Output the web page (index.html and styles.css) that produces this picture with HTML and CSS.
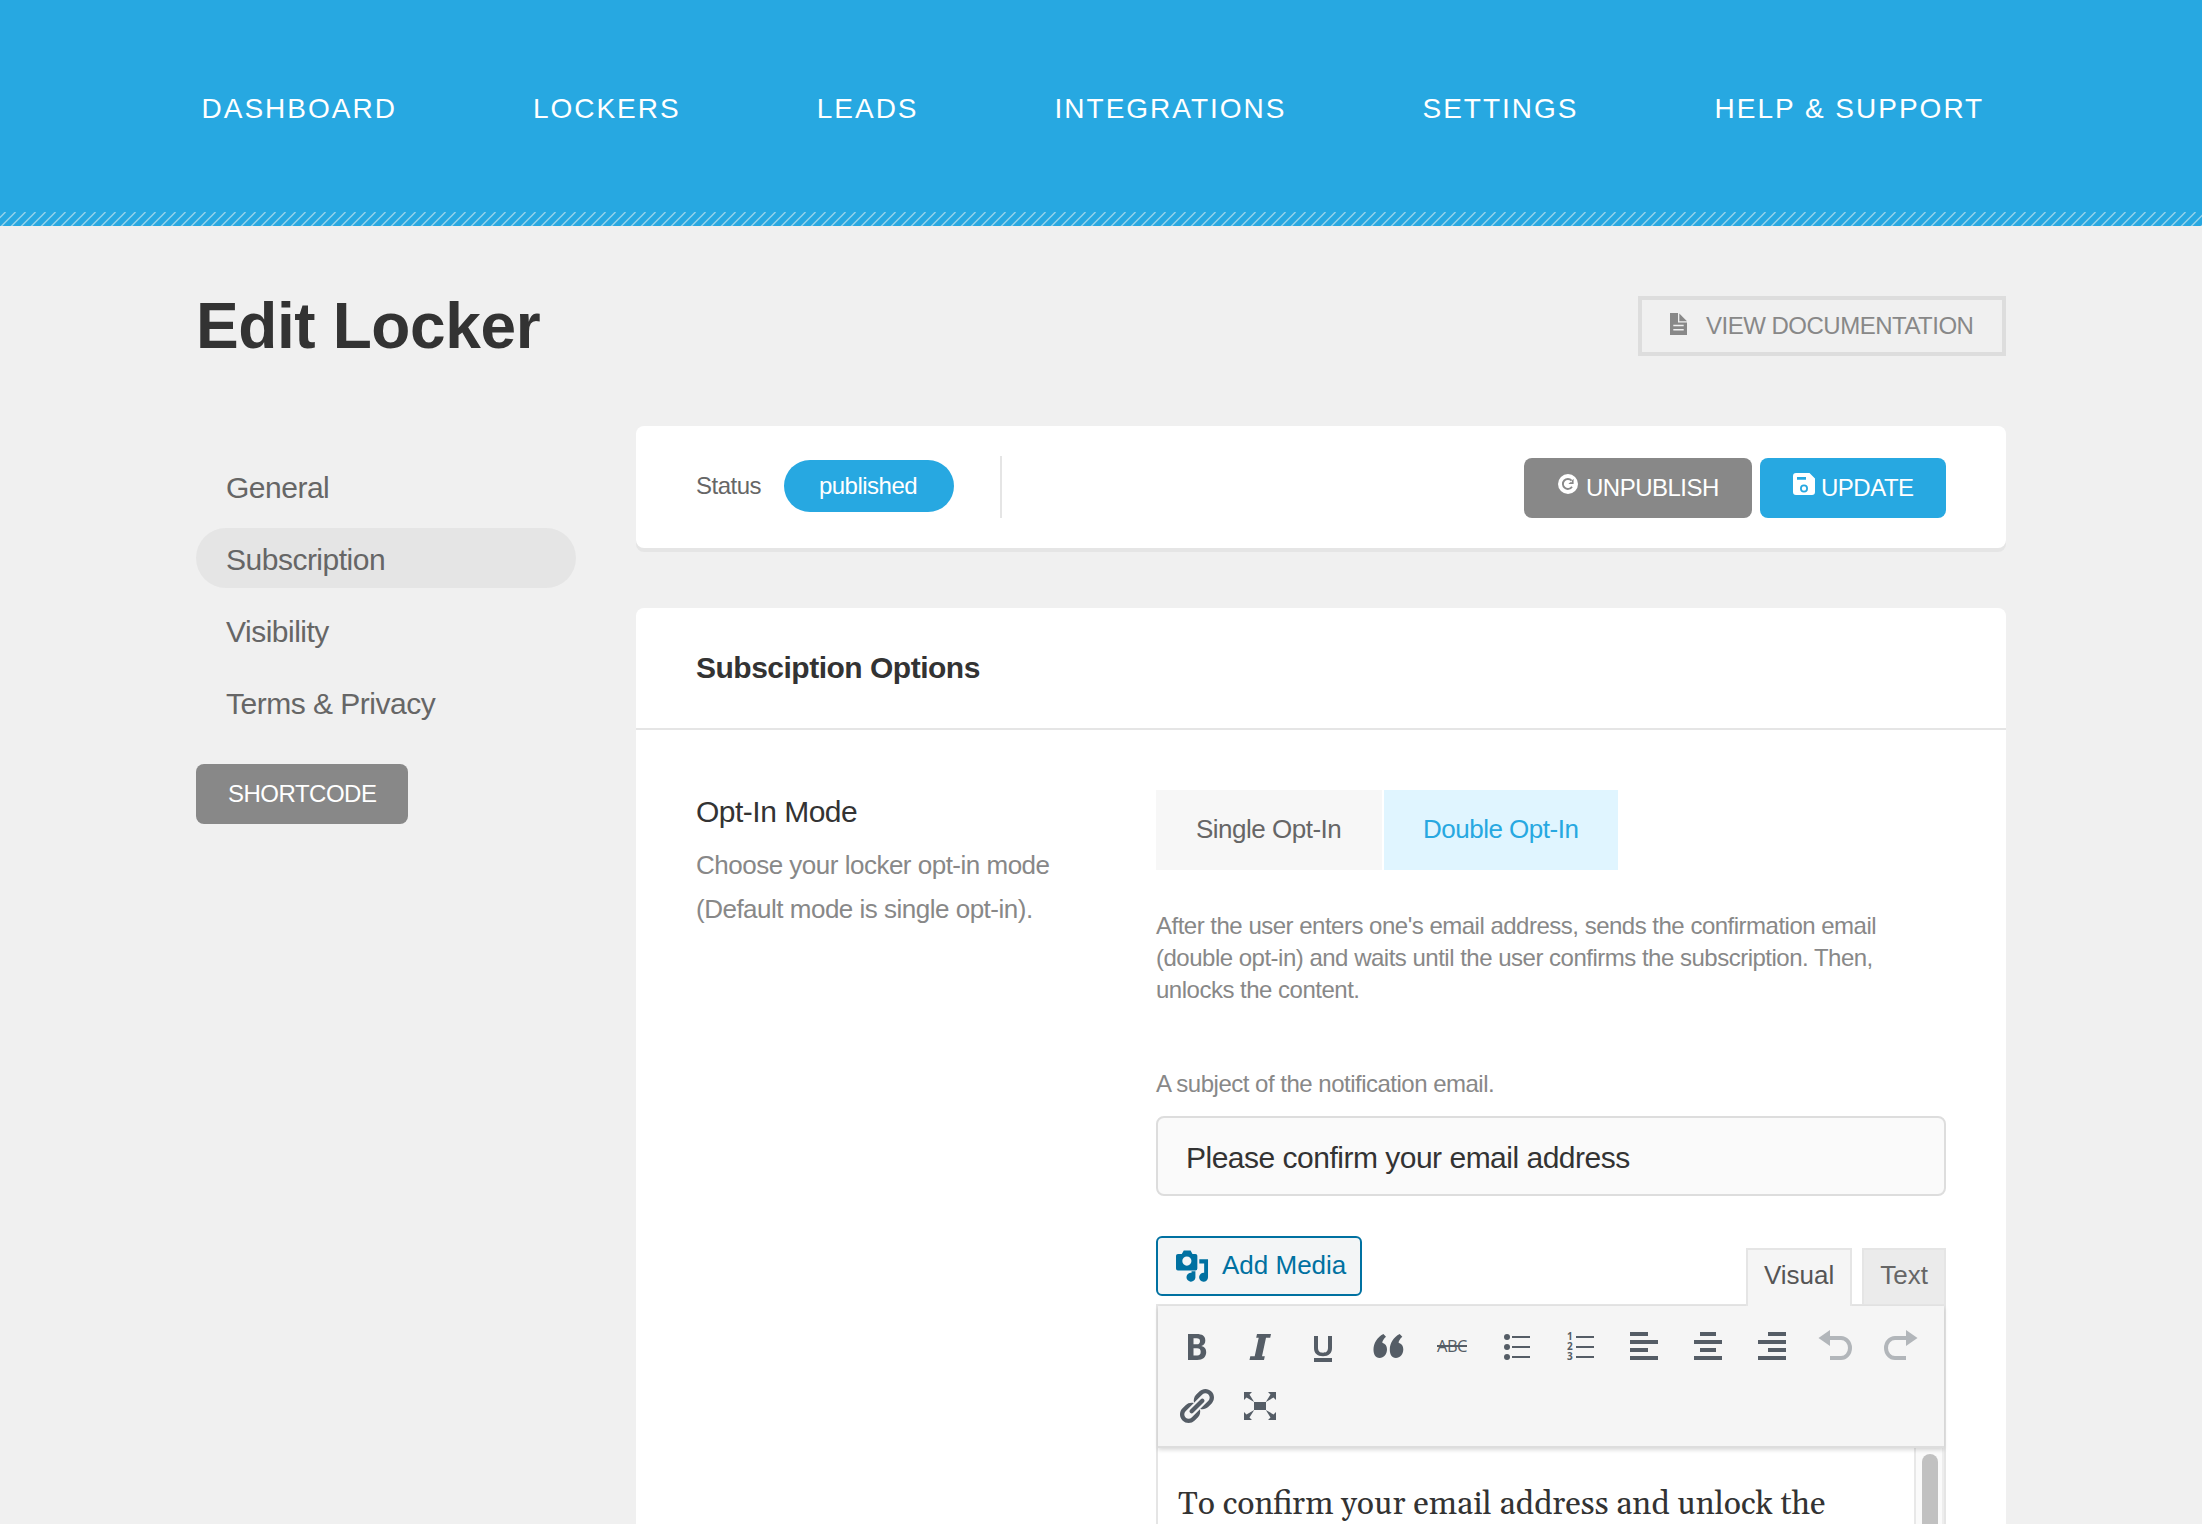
FILE: index.html
```html
<!DOCTYPE html>
<html lang="en">
<head>
<meta charset="utf-8">
<title>Edit Locker</title>
<link rel="stylesheet" href="styles.css">
</head>
<body>
<header class="topbar">
  <nav class="topnav">
    <a>DASHBOARD</a><a>LOCKERS</a><a>LEADS</a><a>INTEGRATIONS</a><a>SETTINGS</a><a>HELP &amp; SUPPORT</a>
  </nav>
  <svg class="stripes"><defs><pattern id="hatch" width="10" height="14" patternUnits="userSpaceOnUse"><path d="M-9 14.500 5.500 0M1 14.500 15.500 0M-19 14.500-4.500 0" stroke="#cfe6ee" stroke-opacity=".65" stroke-width="1.500"/></pattern></defs><rect width="100%" height="14" fill="url(#hatch)"/></svg>
</header>
<main class="page">
  <div class="page-head">
    <h1>Edit Locker</h1>
    <a class="doc-link">
      <svg class="doc-icon" viewBox="0 0 17 22"><path fill="currentColor" fill-rule="evenodd" d="M0 0h8v9.500h9V22H0zM3.300 11.800v1.400h10.400v-1.400zM3.300 16v1.400h10.400V16z"/><path fill="currentColor" d="M9.300.500 17 8.200H9.300z"/></svg>
      <span>VIEW DOCUMENTATION</span>
    </a>
  </div>
  <div class="columns">
    <aside class="sidebar">
      <a class="side-item">General</a>
      <a class="side-item side-active">Subscription</a>
      <a class="side-item">Visibility</a>
      <a class="side-item">Terms &amp; Privacy</a>
      <a class="btn btn-shortcode">SHORTCODE</a>
    </aside>
    <div class="content">
      <section class="status-card">
        <span class="status-label">Status</span>
        <span class="pill">published</span>
        <span class="divider"></span>
        <a class="btn btn-unpublish">
          <svg class="icon-unpublish" viewBox="0 0 20 20"><circle cx="10" cy="10" r="10" fill="#fff"/><path d="M13.600 6.600A5 5 0 1 0 14 12.800" fill="none" stroke="#888" stroke-width="1.900"/><path d="M15.600 4.800v5.200h-5.200l1.800-1.700h1.700V6.500z" fill="#888"/></svg>
          <span>UNPUBLISH</span>
        </a>
        <a class="btn btn-update">
          <svg class="icon-save" viewBox="0 0 22 22"><path fill="#fff" fill-rule="evenodd" d="M3 0h13.500L22 5.500V19a3 3 0 0 1-3 3H3a3 3 0 0 1-3-3V3a3 3 0 0 1 3-3zM4 4v2.800h9V4zM11 11.500a4 4 0 1 0 0 8 4 4 0 0 0 0-8zm0 1.800a2.200 2.200 0 1 1 0 4.400 2.200 2.200 0 0 1 0-4.400z"/></svg>
          <span>UPDATE</span>
        </a>
      </section>
      <section class="options-card">
        <h2>Subsciption Options</h2>
        <div class="option-row">
          <div class="option-info">
            <h3>Opt-In Mode</h3>
            <p>Choose your locker opt-in mode<br>(Default mode is single opt-in).</p>
          </div>
          <div class="option-body">
            <div class="switch"><a class="switch-item">Single Opt-In</a><a class="switch-item switch-on">Double Opt-In</a></div>
            <p class="hint">After the user enters one's email address, sends the confirmation email<br>(double opt-in) and waits until the user confirms the subscription. Then,<br>unlocks the content.</p>
            <p class="field-label">A subject of the notification email.</p>
            <div class="field">Please confirm your email address</div>
            <div class="editor-top">
              <a class="add-media">
                <svg class="media-icon" viewBox="0 0 34 34"><path fill="currentColor" fill-rule="evenodd" d="M2 4h4l2-3.500h7L17 4h3a2 2 0 0 1 2 2v13a2 2 0 0 1-2 2H2a2 2 0 0 1-2-2V6a2 2 0 0 1 2-2zm9.200 2.700a4.700 4.700 0 1 0 0 9.400 4.700 4.700 0 0 0 0-9.400z"/><path fill="currentColor" d="M24 9.500h9V28a4.600 4.600 0 1 1-4-4.500V14h-5zM16 22h4v6.300a4.600 4.600 0 1 1-4-4.800z"/></svg>
                <span>Add Media</span>
              </a>
              <div class="editor-tabs"><a class="tab tab-on">Visual</a><a class="tab">Text</a></div>
            </div>
            <div class="editor">
              <div class="toolbar">
                <svg viewBox="0 0 40 40"><path fill-rule="evenodd" d="M12 8h8.500c5.800 0 8.800 2 8.800 6.400 0 2.900-1.300 4.800-4 5.600 3.200.7 4.900 2.700 4.900 6 0 5-3.300 8-9 8H12zm5.500 4.300v6h3.300c2.200 0 3.200-1 3.200-3.100s-1.100-2.900-3.400-2.900zm0 10v7.300h3.700c2.400 0 3.500-1.300 3.500-3.800 0-2.400-1.200-3.500-3.700-3.500z"/></svg>
                <svg viewBox="0 0 40 40"><path d="M17 8h14l-.8 3.800h-4.200L22 30.200h2.800L24 34H9.500l.8-3.800h4.400l4-18.400h-2.500z"/></svg>
                <svg viewBox="0 0 40 40"><path d="M10 10h4v11.500c0 3.600 1.600 5.200 5 5.200s5-1.600 5-5.200V10h4v12c0 5.400-3.200 8.200-9 8.200S10 27.400 10 22zM10 32h18v4H10z"/></svg>
                <svg viewBox="0 0 40 40"><path d="M15.400 8 18 10.800c-2.400 2.200-3.600 4.200-3.700 6 3 .8 4.700 3.200 4.700 6.500 0 5-3.200 8.700-7.400 8.700-4.300 0-6.100-3.700-6.100-8.500C5.500 17.300 9 11.300 15.400 8z"/><path d="M31.700 8l2.600 2.800c-2.400 2.200-3.600 4.200-3.700 6 3 .8 4.700 3.200 4.700 6.500 0 5-3.200 8.700-7.400 8.700-4.300 0-6.100-3.700-6.100-8.500 0-6.200 3.500-12.200 9.900-15.500z"/></svg>
                <span class="abc">ABC</span>
                <svg viewBox="0 0 40 40"><path d="M16 10h18v2H16zM16 20h18v2H16zM16 30h18v2H16z"/><circle cx="11" cy="11" r="3"/><circle cx="11" cy="21" r="3"/><circle cx="11" cy="31" r="3"/></svg>
                <span class="ol"><span class="ol-nums"><i>1</i><i>2</i><i>3</i></span><svg viewBox="0 0 40 40"><path d="M16 10h18v2H16zM16 20h18v2H16zM16 30h18v2H16z"/></svg></span>
                <svg viewBox="0 0 40 40"><path d="M6 6h18v4H6zM6 14h28v4H6zM6 22h18v4H6zM6 30h28v4H6z"/></svg>
                <svg viewBox="0 0 40 40"><path d="M12 6h16v4H12zM6 14h28v4H6zM12 22h16v4H12zM6 30h28v4H6z"/></svg>
                <svg viewBox="0 0 40 40"><path d="M16 6h18v4H16zM6 14h28v4H6zM16 22h18v4H16zM6 30h28v4H6z"/></svg>
                <svg class="dim" viewBox="0 0 40 40"><path d="M14 4v6h11a11 12 0 0 1 0 24H14v-4h11a7 8 0 0 0 0-16H14v6L2.500 12z"/></svg>
                <svg class="dim" viewBox="0 0 40 40"><path d="M26 4v6H15a11 12 0 0 0 0 24h11v-4H15a7 8 0 0 1 0-16h11v6l11.500-8z"/></svg>
                <svg viewBox="0 0 20 20"><path d="M17.740 2.760c1.680 1.690 1.680 4.410 0 6.100l-1.530 1.520c-1.120 1.120-2.700 1.470-4.140 1.090l2.620-2.610.760-.770.760-.760c.840-.840.840-2.200 0-3.040-.840-.850-2.200-.850-3.040 0l-.770.760-3.380 3.380c-.370-1.440-.020-3.020 1.100-4.140l1.520-1.530c1.690-1.680 4.420-1.680 6.100 0zM8.590 13.430l5.340-5.340c.420-.420.420-1.100 0-1.520-.440-.430-1.130-.390-1.530 0l-5.330 5.340c-.420.420-.420 1.100 0 1.520.440.430 1.130.390 1.520 0zm-.760 2.290l4.140-4.150c.380 1.440.030 3.020-1.090 4.140l-1.520 1.530c-1.690 1.680-4.410 1.680-6.100 0-1.680-1.680-1.680-4.420 0-6.100l1.530-1.520c1.120-1.120 2.700-1.470 4.140-1.100l-4.140 4.150c-.850.840-.850 2.200 0 3.050.840.840 2.200.840 3.040 0z"/></svg>
                <svg viewBox="0 0 40 40"><path d="M14 16h12v8H14zM4 6h8l-2.500 2.500 4.700 7.500-7.700-4.500L4 14zM36 6h-8l2.500 2.500-4.700 7.500 7.700-4.500L36 14zM4 34h8l-2.500-2.500 4.700-7.500-7.700 4.500L4 26zM36 34h-8l2.500-2.500-4.700-7.500 7.700 4.500L36 26z"/></svg>
              </div>
              <div class="editor-area">
                <p class="editor-text">To confirm your email address and unlock the</p>
                <div class="scroll-track"><div class="scroll-thumb"></div></div>
              </div>
            </div>
          </div>
        </div>
      </section>
    </div>
  </div>
</main>
</body>
</html>
```
FILE: styles.css
```css
* { box-sizing: border-box; }
html, body { height: 100%; }
body {
  margin: 0;
  background: #f0f0f0;
  font-family: "Liberation Sans", Arial, sans-serif;
  font-size: 24px;
  letter-spacing: -0.5px;
  color: #666;
  overflow: hidden;
}
h1, h2, h3, p { margin: 0; }
svg { display: block; }

.topbar { height: 226px; background: #27a8e1; display: flex; flex-direction: column; justify-content: space-between; }
.topnav { display: flex; gap: 136px; padding: 93px 0 0 201.5px; }
.topnav a { color: #fff; font-size: 28px; line-height: 32px; letter-spacing: 2px; white-space: nowrap; }
.stripes { width: 100%; height: 14px; }

.page { width: 1810px; margin-left: 196px; }
.page-head { height: 200px; display: flex; justify-content: space-between; align-items: flex-start; padding-top: 62px; }
h1 { font-size: 64px; line-height: 76px; color: #333; letter-spacing: -0.4px; }
.doc-link {
  display: flex; align-items: center; gap: 19px;
  width: 368px; height: 60px; margin-top: 8px; padding-left: 28px;
  border: 4px solid #ddd; color: #888; white-space: nowrap;
}
.doc-icon { width: 17px; height: 22px; margin-top: -4px; }

.columns { display: flex; justify-content: space-between; align-items: flex-start; }
.sidebar { width: 380px; padding-top: 30px; display: flex; flex-direction: column; align-items: flex-start; gap: 12px; }
.side-item { width: 100%; height: 60px; padding: 1px 30px 0; border-radius: 30px; font-size: 30px; line-height: 61px; }
.side-active { background: #e5e5e5; }
.btn { display: flex; align-items: center; height: 60px; border-radius: 8px; background: #888; color: #fff; }
.btn-shortcode { width: 212px; padding-left: 32px; margin-top: 20px; }

.content { width: 1370px; }
.status-card {
  height: 122px; padding: 0 60px; display: flex; align-items: center;
  background: #fff; border-radius: 8px; box-shadow: 0 4px 0 #e5e5e5;
}
.status-label { width: 88px; margin-top: -2px; }
.pill { width: 170px; height: 52px; padding-right: 2px; line-height: 52px; border-radius: 26px; margin-top: -2px; background: #27a8e1; color: #fff; text-align: center; }
.divider { width: 2px; height: 62px; margin-left: 46px; background: #e5e5e5; }
.btn-unpublish { width: 228px; margin: 2px 8px 0 auto; padding-left: 34px; gap: 8px; }
.btn-update { width: 186px; margin-top: 2px; padding-left: 33px; gap: 6px; background: #27a8e1; }
.icon-unpublish { width: 20px; height: 20px; margin-top: -8px; }
.icon-save { width: 22px; height: 22px; margin-top: -8px; }

.options-card { height: 980px; margin-top: 60px; background: #fff; border-radius: 8px 8px 0 0; }
h2 { height: 122px; padding: 0 60px; border-bottom: 2px solid #e5e5e5; font-size: 30px; line-height: 119px; color: #333; }
.option-row { display: flex; justify-content: space-between; padding: 60px 60px 0; }
h3 { margin-top: 4px; font-size: 30px; font-weight: 400; line-height: 36px; color: #333; }
.option-info p { margin-top: 13px; font-size: 26px; line-height: 44px; color: #888; white-space: nowrap; }
.option-body { width: 790px; }
.switch { display: flex; gap: 2px; height: 80px; }
.switch-item { width: 226px; padding-left: 40px; font-size: 26px; line-height: 79px; background: #f7f7f7; white-space: nowrap; }
.switch-on { width: 234px; padding-left: 39px; background: #e0f5ff; color: #27a8e1; }
.hint { margin-top: 40px; line-height: 32px; color: #888; white-space: nowrap; }
.field-label { margin-top: 62px; line-height: 32px; color: #888; }
.field { height: 80px; margin-top: 16px; padding: 1px 28px 0; border: 2px solid #ddd; border-radius: 8px; background: #fafafa; font-size: 30px; line-height: 78px; color: #333; }

.editor-top { display: flex; justify-content: space-between; align-items: flex-start; height: 68px; margin-top: 40px; letter-spacing: 0; }
.add-media {
  display: flex; align-items: center; gap: 13px; width: 206px; height: 60px; padding-left: 18px;
  border: 2px solid #0071a1; border-radius: 6px; background: #f3f5f6; color: #0071a1; font-size: 26px; white-space: nowrap;
}
.add-media span { margin-top: -2px; }
.media-icon { width: 33px; height: 33px; }
.editor-tabs { display: flex; gap: 10px; margin-top: 12px; }
.tab { height: 56px; padding: 0 16px; border: 2px solid #e5e5e5; border-bottom: 0; background: #ebebeb; color: #666; font-size: 26px; line-height: 50px; }
.tab-on { position: relative; z-index: 1; height: 58px; background: #f5f5f5; color: #555; }
.editor { height: 284px; border: 2px solid #e5e5e5; border-bottom: 0; }
.toolbar {
  position: relative;
  height: 142px; padding: 10px 6px 0; display: grid; grid-template-columns: repeat(12, 64px); grid-auto-rows: 60px;
  place-items: center; background: #f5f5f5; border-bottom: 2px solid #ddd; box-shadow: 0 2px 4px rgba(0, 0, 0, .15);
}
.toolbar svg { width: 40px; height: 40px; fill: #555d66; }
.toolbar .dim { fill: #b2b6ba; }
.abc { font: 500 16.5px/20px "Open Sans", sans-serif; color: #555d66; text-decoration: line-through; text-decoration-thickness: 2px; }
.ol { position: relative; }
.ol-nums { position: absolute; left: 7px; top: 5px; display: flex; flex-direction: column; }
.ol-nums i { font: 700 10px/10px "Open Sans", sans-serif; color: #555d66; }
.editor-area { display: flex; justify-content: space-between; height: 140px; padding-left: 20px; background: #fff; }
.editor-text { padding-top: 37px; font: 32px/40px Gelasio, Georgia, "Liberation Serif", serif; color: #333; letter-spacing: 0; white-space: nowrap; }
.scroll-track { width: 30px; padding: 6px 6px 0; background: #fafafa; border-left: 2px solid #e8e8e8; border-right: 2px solid #ededed; }
.scroll-thumb { width: 16px; height: 134px; border-radius: 8px; background: #c1c1c1; }
```
